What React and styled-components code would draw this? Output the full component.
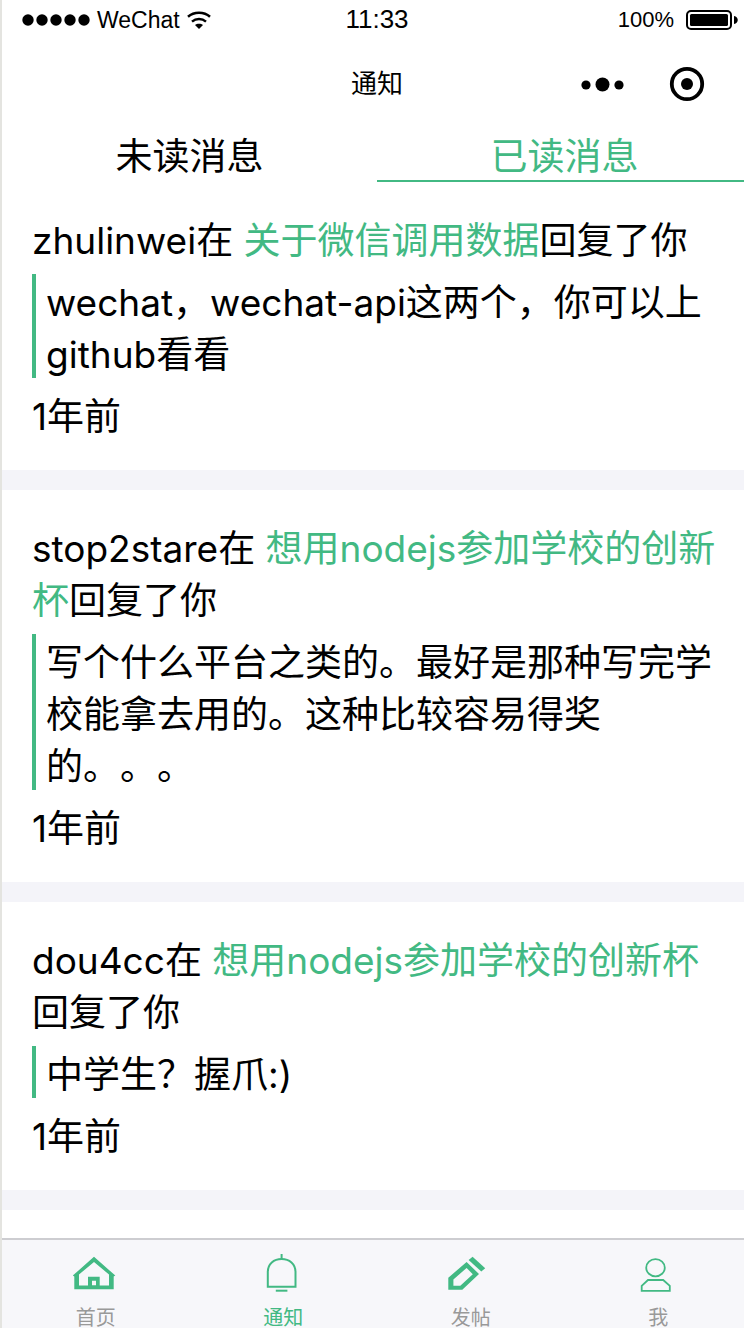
import React from 'react';
import styled, { createGlobalStyle } from 'styled-components';

const GREEN = '#42b983';
const LATIN_FIRST = 'Inter, "Noto Sans CJK SC", sans-serif';
const CJK_FIRST = '"Noto Sans CJK SC", sans-serif';

const GlobalStyle = createGlobalStyle`
  * { box-sizing: border-box; }
  body {
    margin: 0;
    background: #fff;
    color: #000;
    font-family: ${CJK_FIRST};
    text-spacing-trim: space-all;
  }
`;

const Shell = styled.div`
  height: 100vh;
  overflow: hidden;
  border-left: 2px solid #e4e4e0;
`;

const Page = styled.div`
  display: flex;
  flex-direction: column;
  height: 100%;
  margin-right: -8px;
`;

const StatusBar = styled.div`
  display: grid;
  grid-template-columns: 1fr auto 1fr;
  align-items: center;
  height: 40px;
  padding: 0 14px;
  font-family: "Liberation Sans", sans-serif;
  flex: none;
`;

const Carrier = styled.div`
  display: flex;
  align-items: center;
  gap: 7px;
  padding-left: 6px;
  font-size: 23px;
  line-height: 40px;
`;

const Clock = styled.time`
  font-size: 26px;
  line-height: 38px;
  padding-bottom: 2px;
`;

const Power = styled.div`
  display: flex;
  align-items: center;
  justify-content: flex-end;
  gap: 12px;
  font-size: 22px;
  line-height: 40px;
`;

const NavBar = styled.header`
  display: grid;
  grid-template-columns: 1fr auto 1fr;
  align-items: center;
  height: 88px;
  padding: 0 47px;
  flex: none;
`;

const Title = styled.h1`
  grid-column: 2;
  margin: 0;
  font-family: ${LATIN_FIRST};
  font-size: 26px;
  font-weight: 400;
  line-height: 88px;
`;

const NavActions = styled.div`
  display: flex;
  justify-content: flex-end;
  align-items: center;
  gap: 45px;
`;

const IconButton = styled.button`
  display: flex;
  padding: 0;
  border: 0;
  background: none;
  color: inherit;
`;

const Tabs = styled.div`
  display: flex;
  flex: none;
`;

const Tab = styled.button`
  flex: 1;
  padding: 0;
  border: 0;
  border-bottom: 2px solid ${(p) => (p.$active ? GREEN : 'transparent')};
  background: none;
  color: ${(p) => (p.$active ? GREEN : '#000')};
  font-family: inherit;
  font-size: 37px;
  line-height: 52px;
`;

const List = styled.main`
  flex: 1;
  min-height: 0;
  overflow: hidden;
`;

const Message = styled.article`
  display: flex;
  flex-direction: column;
  gap: 10px;
  padding: 30px;
  border-bottom: 20px solid #f4f4f9;
  font-size: 37px;
  line-height: 52px;
`;

const Line = styled.p`
  margin: 0;
`;

const Quote = styled.blockquote`
  margin: 0;
  padding-left: 10px;
  border-left: 4px solid ${GREEN};
`;

const Text = styled.span`
  font-family: ${LATIN_FIRST};
  line-height: 1;
`;

const Topic = styled.a`
  color: ${GREEN};
  text-decoration: none;
`;

const BottomBar = styled.nav`
  display: flex;
  flex: none;
  height: 90px;
  border-top: 2px solid #cdcdd1;
  background: #f7f7fa;
`;

const BottomLink = styled.a`
  flex: 1;
  display: flex;
  flex-direction: column;
  align-items: center;
  gap: 4px;
  padding-top: 14px;
  color: ${(p) => (p.$active ? GREEN : '#999')};
  font-size: 20px;
  line-height: 22px;
  text-decoration: none;
`;

const BottomIcon = styled.svg`
  width: 48px;
  height: 48px;
  flex: none;
`;

const SignalDots = () => (
  <svg width="68" height="12" viewBox="0 0 68 12" aria-hidden="true">
    {[6, 20, 34, 48, 62].map((x) => <circle key={x} cx={x} cy="6" r="5.7" />)}
  </svg>
);

const Wifi = () => (
  <svg width="24" height="18" viewBox="0 0 24 18" fill="none" stroke="#000" aria-hidden="true">
    <path d="M1 5.8C7 .4 17 .4 23 5.8" strokeWidth="2.5" />
    <path d="M5 10.6C9 7.2 15 7.2 19 10.6" strokeWidth="2.5" />
    <path d="M8 14C10 12.2 14 12.2 16 14L12 18Z" fill="#000" stroke="none" />
  </svg>
);

const Battery = () => (
  <svg width="52" height="20" viewBox="0 0 52 20" aria-hidden="true">
    <rect x="1" y="1" width="44" height="18" rx="4" fill="none" stroke="#000" strokeWidth="2" />
    <rect x="4" y="4" width="38" height="12" rx="1.5" />
    <path d="M48 6C53 7 53 13 48 14Z" />
  </svg>
);

const bottomIcons = {
  home: (
    <path
      fill={GREEN}
      fillRule="evenodd"
      d="M22 2.7L43.3 21.6L41.7 22.6V35.3H2.3V22.6L.8 21.6ZM22 8L7 20.5V31.5H16V22.7H27.7V31.5H37V20.5ZM20 26.7V31.3H24V26.7Z"
    />
  ),
  bell: (
    <g fill="none" stroke={GREEN} strokeWidth="2">
      <path d="M22.6 0V5" />
      <path d="M8.8 32.7V18C8.8 10 14.8 5 22.6 5S36.5 10 36.5 18V32.7Z" />
      <path d="M16.8 36.7H28.4" />
    </g>
  ),
  pencil: (
    <g fill={GREEN}>
      <path
        fillRule="evenodd"
        d="M1.3 23.7L19.6 8L32 20L15.3 35.7H1.3ZM6.4 25.4V31.7H13.3L25.8 20.2L19.6 14Z"
      />
      <path d="M25.6 2.7L38.2 14.3L34.3 17.6L21.6 6Z" />
    </g>
  ),
  person: (
    <g fill="none" stroke={GREEN} strokeWidth="1.8">
      <ellipse cx="21.5" cy="13.7" rx="9.3" ry="8.6" />
      <path d="M7.7 36.8V31.9L14 26H29.2L35.8 31.9V36.8Z" />
    </g>
  ),
};

const messages = [
  { user: 'zhulinwei', topic: '关于微信调用数据', reply: 'wechat，wechat-api这两个，你可以上github看看' },
  { user: 'stop2stare', topic: '想用nodejs参加学校的创新杯', reply: '写个什么平台之类的。最好是那种写完学校能拿去用的。这种比较容易得奖的。。。' },
  { user: 'dou4cc', topic: '想用nodejs参加学校的创新杯', reply: '中学生？握爪:)' },
];

const links = [
  { icon: 'home', label: '首页' },
  { icon: 'bell', label: '通知', active: true },
  { icon: 'pencil', label: '发帖' },
  { icon: 'person', label: '我' },
];

export default function App() {
  return (
    <Shell lang="zh-CN">
      <GlobalStyle />
      <Page>
        <StatusBar>
          <Carrier><SignalDots />WeChat<Wifi /></Carrier>
          <Clock>11:33</Clock>
          <Power>100%<Battery /></Power>
        </StatusBar>
        <NavBar>
          <Title>通知</Title>
          <NavActions>
            <IconButton aria-label="更多">
              <svg width="44" height="16" viewBox="0 0 44 16">
                <circle cx="6" cy="9" r="4.6" />
                <circle cx="22.5" cy="8.5" r="7" />
                <circle cx="39" cy="9" r="4.6" />
              </svg>
            </IconButton>
            <IconButton aria-label="关闭">
              <svg width="36" height="36" viewBox="0 0 36 36">
                <circle cx="18" cy="18" r="15.2" fill="none" stroke="#000" strokeWidth="3.8" />
                <circle cx="18" cy="18" r="6" />
              </svg>
            </IconButton>
          </NavActions>
        </NavBar>
        <Tabs role="tablist">
          <Tab role="tab" aria-selected="false">未读消息</Tab>
          <Tab role="tab" aria-selected="true" $active>已读消息</Tab>
        </Tabs>
        <List>
          {messages.map((m) => (
            <Message key={m.user}>
              <Line>
                <Text>{m.user}在 <Topic href="#topic">{m.topic}</Topic>回复了你</Text>
              </Line>
              <Quote><Text>{m.reply}</Text></Quote>
              <Line><Text>1年前</Text></Line>
            </Message>
          ))}
        </List>
        <BottomBar>
          {links.map((l) => (
            <BottomLink key={l.icon} href={`#${l.icon}`} $active={l.active}>
              <BottomIcon viewBox="0 0 48 48" aria-hidden="true">{bottomIcons[l.icon]}</BottomIcon>
              {l.label}
            </BottomLink>
          ))}
        </BottomBar>
      </Page>
    </Shell>
  );
}
